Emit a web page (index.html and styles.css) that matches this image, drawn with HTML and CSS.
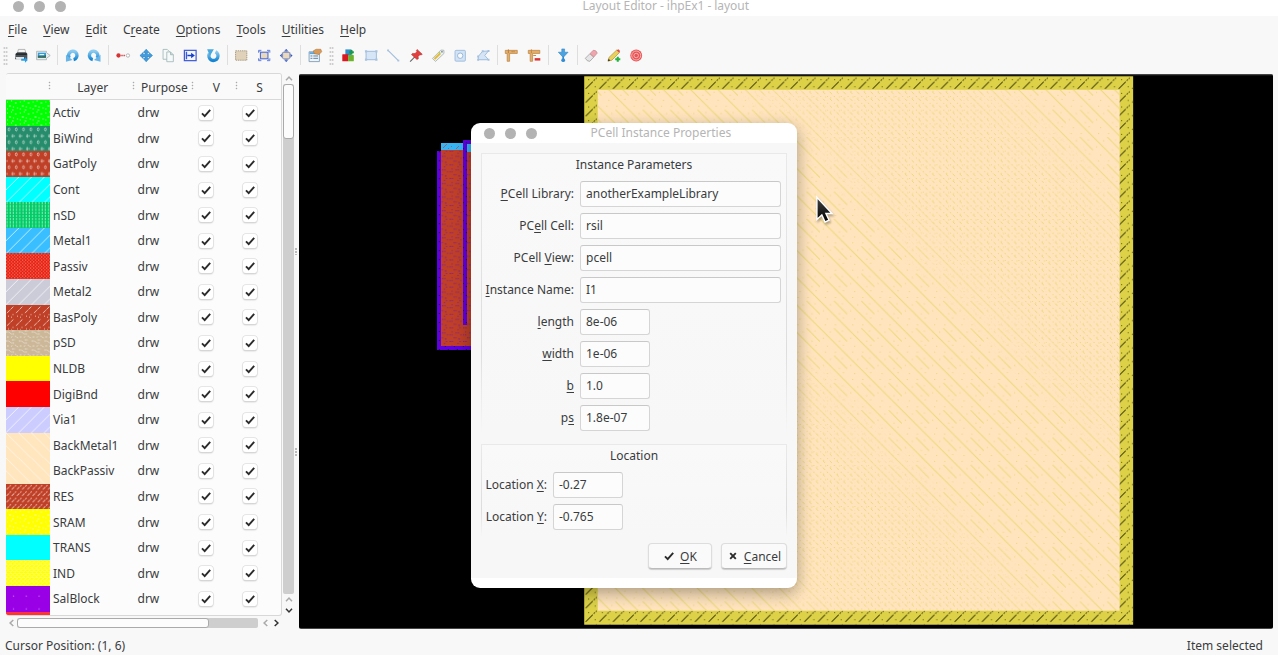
FILE: index.html
```html
<!DOCTYPE html>
<html lang="en">
<head>
<meta charset="utf-8">
<title>Layout Editor - ihpEx1 - layout</title>
<link rel="stylesheet" href="styles.css">
</head>
<body>
<svg class="defs" width="0" height="0">
<defs>
<linearGradient id="gBlue" x1="0" y1="0" x2="0" y2="1"><stop offset="0" stop-color="#8ccbf0"/><stop offset="1" stop-color="#1686d2"/></linearGradient>
<linearGradient id="gCur" x1="0" y1="0" x2="0" y2="1"><stop offset="0" stop-color="#444"/><stop offset="1" stop-color="#000"/></linearGradient>
<symbol id="tick" viewBox="0 0 12 12"><path d="M2 6.4 4.7 9.2 10.2 2.9" fill="none" stroke="#2b2b2b" stroke-width="1.9"/></symbol>
<symbol id="chev" viewBox="0 0 8 8"><path d="M1 5.8 4 2.6 7 5.8" fill="none" stroke="currentColor" stroke-width="1.5"/></symbol>
<pattern id="pSpeck" width="12.8" height="11" patternUnits="userSpaceOnUse"><path d="M1 2h1M5 1h1M9 3h1.5M3 6h2M7 7h1M11 8h1M1 9h1M6 10h1.5" stroke="#fff" stroke-opacity=".75"/></pattern>
<pattern id="pBeads" width="7.3" height="12.8" patternUnits="userSpaceOnUse"><ellipse cx="3" cy="3.4" rx=".9" ry="1.5" fill="none" stroke="#fff" stroke-width=".7" stroke-opacity=".75"/><path d="M6.6 8v4M5.4 10h2.4M1 9v2" stroke="#fff" stroke-width=".7" stroke-opacity=".7"/></pattern>
<pattern id="pDiag" width="12.8" height="12.8" patternUnits="userSpaceOnUse"><path d="M-1 13.8 13.8-1M-1 1 1-1M11.8 13.8 13.8 11.8" stroke="#fff" stroke-width=".9" stroke-opacity=".75"/></pattern>
<pattern id="pBack" width="12.8" height="12.8" patternUnits="userSpaceOnUse"><path d="M-1-1 13.8 13.8M11.8-1l2 2M-1 11.8l2 2" stroke="#fff" stroke-width=".8" stroke-opacity=".6"/></pattern>
<pattern id="pVert" width="3.2" height="3.2" patternUnits="userSpaceOnUse"><path d="M1 0v2.4" stroke="#fff" stroke-width=".8" stroke-opacity=".65"/></pattern>
<pattern id="pDots" width="3.2" height="3.2" patternUnits="userSpaceOnUse"><path d="M0 .8h1.1M1.6 2.4h1.1" stroke="#fff" stroke-width=".9" stroke-opacity=".6"/></pattern>
<pattern id="pDash" width="9" height="12.8" patternUnits="userSpaceOnUse"><path d="M1 8 7.5 1.5" stroke="#fff" stroke-width=".9" stroke-opacity=".75" stroke-dasharray="4 1"/><path d="M2 11h1M6.5 9.5h1M5 12h1" stroke="#fff" stroke-opacity=".7"/></pattern>
<pattern id="pZig" width="12.8" height="9" patternUnits="userSpaceOnUse"><path d="M0 2h3l2 2h3M6 1h3M9 6l3 2M1 7h2M5 7.5l2-1.5" stroke="#fff" stroke-width=".8" fill="none" stroke-opacity=".65" stroke-dasharray="1.6 .8"/></pattern>
<pattern id="pTight" width="5.2" height="6.4" patternUnits="userSpaceOnUse"><path d="M.5 5.5 5 1" stroke="#fff" stroke-width=".9" stroke-opacity=".65" stroke-dasharray="3.5 1"/></pattern>
<pattern id="pWeave" width="4.3" height="4.3" patternUnits="userSpaceOnUse"><path d="M0 4 4 0M.3.5h1.6M3 3h1" stroke="#fff" stroke-width=".8" stroke-opacity=".65"/></pattern>
<pattern id="pFew" width="12.8" height="12.8" patternUnits="userSpaceOnUse"><path d="M7 10h1" stroke="#fff" stroke-opacity=".6"/></pattern>
<pattern id="cFill" width="27.35" height="27.35" patternUnits="userSpaceOnUse"><path d="M-1-1 28.35 28.35M26.35-1l2 2M-1 26.35l2 2" stroke="#ebd976"/><path d="M14 0 27.3 13.3" stroke="#ebd976"/><path d="M3 10h1M7 18h1M19 13h1M10 4h1M23 17h1M15 24h1M5 24h1M22 3h1" stroke="#e8d86b"/></pattern>
<pattern id="cFill2" width="13.68" height="13.68" patternUnits="userSpaceOnUse"><path d="M0 0 13.68 13.68M6.84 0l6.84 6.84M0 6.84l6.84 6.84" stroke="#e9d770" stroke-width=".9" stroke-dasharray="1.4 2.4 3 2.87"/><path d="M10 2h1M3 9h1M5 1h1" stroke="#e8d86b"/></pattern>
<linearGradient id="gBand" gradientUnits="userSpaceOnUse" x1="540" y1="0" x2="780" y2="-240" spreadMethod="repeat"><stop offset="0" stop-color="#000"/><stop offset=".2" stop-color="#000"/><stop offset=".4" stop-color="#fff"/><stop offset=".65" stop-color="#fff"/><stop offset=".85" stop-color="#000"/><stop offset="1" stop-color="#000"/></linearGradient>
<linearGradient id="gGap" gradientUnits="userSpaceOnUse" x1="540" y1="0" x2="780" y2="-240" spreadMethod="repeat"><stop offset="0" stop-color="#fff"/><stop offset=".2" stop-color="#fff"/><stop offset=".4" stop-color="#222"/><stop offset=".65" stop-color="#222"/><stop offset=".85" stop-color="#fff"/><stop offset="1" stop-color="#fff"/></linearGradient>
<mask id="band" maskUnits="userSpaceOnUse" x="299" y="74" width="975" height="555"><rect x="299" y="74" width="975" height="555" fill="url(#gBand)"/></mask>
<mask id="gap" maskUnits="userSpaceOnUse" x="299" y="74" width="975" height="555"><rect x="299" y="74" width="975" height="555" fill="url(#gGap)"/></mask>
<pattern id="cEdge" x="584.5" y="76" width="13.68" height="13.68" patternUnits="userSpaceOnUse"><path d="M1.5 12.5 12.5 1.5" stroke="#4b4712" stroke-width="1" stroke-dasharray="10 1.2 2 1"/><path d="M4 3.5h1M10.5 10.5h1" stroke="#5b5619"/></pattern>
<pattern id="cRed" width="13.6" height="13.6" patternUnits="userSpaceOnUse"><path d="M1 1.5h4M9 3.5h1M11 1.5h1M3 5.5h1M7 6.5h4M1 8.5h1M3 8.5h1M12 8.5h1M5 11.5h3M10 12.5h2" stroke="#7a19a0" stroke-dasharray="1.2 1"/></pattern>
<pattern id="cVio" width="9" height="9" patternUnits="userSpaceOnUse"><path d="M1 1l4 4M7 7l1 1" stroke="#1b0052" stroke-width=".9"/></pattern>
</defs>
</svg>
<div class="window">
  <header class="titlebar">
    <div class="dots"><i></i><i></i><i></i></div>
    <span class="title">Layout Editor - ihpEx1 - layout</span>
  </header>
  <nav class="menubar"><span><u>F</u>ile</span><span><u>V</u>iew</span><span><u>E</u>dit</span><span>C<u>r</u>eate</span><span><u>O</u>ptions</span><span><u>T</u>ools</span><span><u>U</u>tilities</span><span><u>H</u>elp</span></nav>
  <div class="toolbar">
    <i class="grip first"></i>
    <svg viewBox="0 0 16 16"><path d="M5 1.5h7l1 4H4z" fill="#f4f4f4" stroke="#888" stroke-width=".6"/><path d="M2 6 4 4.5h9L14.5 6v6h-13z" fill="#4b5358"/><path d="M3 5.5h11v2H2z" fill="#252a2d"/><path d="M2 9.5h9v3H3z" fill="#e1e5e7"/><path d="M8 11.5h4v-1.8l3 3-3 3v-2H8z" fill="#2b9fe6"/></svg>
    <svg viewBox="0 0 16 16"><path d="M1 3.5h10.5V5L15.5 8l-4 3v1.5H1z" fill="#e6eef0" stroke="#9fa9a9" stroke-width=".8"/><path d="M2.3 5H11v5.5H2.3z" fill="#399cd6"/><path d="M2.3 8q4 2 8.7-.5v3H2.3z" fill="#3b6b54"/><path d="M4 7h5" stroke="#fff"/></svg>
    <i class="sep"></i>
    <svg viewBox="0 0 16 16"><path d="M5 10.6A4.5 4.5 0 1 1 9.5 12.3" fill="none" stroke="url(#gBlue)" stroke-width="3.6"/><path d="M1.3 7.3v7.4l7-1.9z" fill="#69b5e7"/></svg>
    <svg viewBox="0 0 16 16"><path d="M11 10.6A4.5 4.5 0 1 0 6.5 12.3" fill="none" stroke="url(#gBlue)" stroke-width="3.6"/><path d="M14.7 7.3v7.4l-7-1.9z" fill="#69b5e7"/></svg>
    <i class="sep"></i>
    <svg viewBox="0 0 16 16"><circle cx="3" cy="8" r="2.3" fill="#d83232"/><path d="M6 8h4" stroke="#c44" stroke-width="1.8" stroke-dasharray="1.5 .8"/><circle cx="13" cy="8" r="1.8" fill="#fff" stroke="#aaa" stroke-width=".9"/></svg>
    <svg viewBox="0 0 16 16"><path d="m8 1.3 3 3.4H9.2v2.1h2.2V5l3.3 3-3.3 3V9.2H9.2v2.1H11l-3 3.4-3-3.4h1.8V9.2H4.6V11L1.3 8l3.3-3v1.8h2.2V4.7H5z" fill="#3f9ee2" stroke="#1f74b7" stroke-width=".6"/></svg>
    <svg viewBox="0 0 16 16" fill="#f5f9f9" stroke="#a3b7b7" stroke-width=".9"><path d="M2.5 1.5H7l3 3V12H2.5z"/><path d="M6.5 4.2h4l3 3v7.4h-7z"/><path d="M10.5 4.2v3h3" fill="#c4d6d6"/></svg>
    <svg viewBox="0 0 16 16"><rect x="1.8" y="2.5" width="12.5" height="11" fill="#f4f7ff" stroke="#3e5bd4" stroke-width="1.3"/><path d="M4 4v8" stroke="#3e5bd4" stroke-width="1.5"/><path d="M5 7.2h4V5l4 3-4 3V8.8H5z" fill="#1740c9"/></svg>
    <svg viewBox="0 0 16 16"><path d="M10.5 4A4.9 4.9 0 1 1 4 6" fill="none" stroke="url(#gBlue)" stroke-width="3.6"/><path d="M1.5 1.2h7.2L4.5 8.4z" fill="#4aa9df"/></svg>
    <i class="sep"></i>
    <svg viewBox="0 0 16 16"><rect x="2" y="3" width="12" height="10" fill="#e0d2ba" stroke="#a5967d" stroke-dasharray="1.5 .8"/></svg>
    <svg viewBox="0 0 16 16"><rect x="4" y="4.5" width="8" height="7" fill="#ead8bd" stroke="#5470d1" stroke-width="1.2"/><path d="M2 5V2.5h3M11 2.5h3V5M14 11v2.5h-3M5 13.5H2V11M3 3.5l2 2M13 3.5l-2 2M13 12.5l-2-2M3 12.5l2-2" fill="none" stroke="#5978d8"/></svg>
    <svg viewBox="0 0 16 16"><path d="m8 1 2 2H6zM8 15l2-2H6zM1.2 8l2.3-2v4zM14.8 8l-2.3-2v4z" fill="#294fc8"/><ellipse cx="8" cy="8" rx="5.2" ry="4.8" fill="#8492bd"/><rect x="4.7" y="5.2" width="6.6" height="5.8" fill="#ead9be"/></svg>
    <i class="sep"></i>
    <svg viewBox="0 0 16 16"><path d="M1.5 4h11v10.5h-11z" fill="#eef4fa" stroke="#7897b1" stroke-width=".9"/><path d="M2 4.5h10v2H2z" fill="#58a5dc"/><path d="M3 8.5h2M6 8.5h5M3 11h2M6 11h5" stroke="#54799a"/><path d="m6 3 3-1.7h5L15 4l-3 3-5-1z" fill="#d69a5a" stroke="#a86931" stroke-width=".5"/></svg>
    <i class="grip"></i>
    <svg viewBox="0 0 16 16"><rect x="5" y="1.5" width="6.5" height="6.5" fill="#318fcb"/><rect x="1.7" y="6.6" width="6.5" height="7.6" rx=".7" fill="#d71920"/><rect x="8" y="7.5" width="6" height="6.7" rx=".7" fill="#6bb32c"/><path d="M11.5 2v5M9 4.5h5" stroke="#16994a" stroke-width="2.1"/></svg>
    <svg viewBox="0 0 16 16"><rect x="2.5" y="3.5" width="11" height="9" fill="#d6e6f7" stroke="#9bb9db"/><path d="M1.3 2.3h2.4v2.4H1.3zM12.3 2.3h2.4v2.4h-2.4zM1.3 11.3h2.4v2.4H1.3zM12.3 11.3h2.4v2.4h-2.4z" fill="#a9c3e0"/></svg>
    <svg viewBox="0 0 16 16"><path d="M2.5 2.5 13.5 13.5" stroke="#9fbddd" stroke-width="1.2"/><path d="M1.5 1.5h2v2h-2zM12.5 12.5h2v2h-2z" fill="#a9c3e0"/></svg>
    <svg viewBox="0 0 16 16"><path d="m1.5 14.5 5-5" stroke="#666" stroke-width="1.2"/><path d="m9 1.5 5.5 5.2-1.4.8-1-.4-2 2 .2 2.4-1.5.8L3 7l1-1.2 2.7.1 2-2-.5-1.3z" fill="#e23e3e" stroke="#ab2020" stroke-width=".5"/></svg>
    <svg viewBox="0 0 16 16"><path d="m1.8 11.2 9-9 3.3.2.1 3.4-9 8.5z" fill="#eef1f1" stroke="#9fa9aa" stroke-width=".8"/><path d="m4 11.8 6-6" stroke="#e5bc34" stroke-width="2.2"/><path d="m9 6 1.2-1.2" stroke="#bc4" stroke-width="2"/><circle cx="12" cy="4" r=".9" fill="#678"/></svg>
    <svg viewBox="0 0 16 16"><rect x="2.5" y="2.5" width="11" height="11.5" rx="1" fill="#d3e3f4" stroke="#9ebcdc"/><circle cx="8" cy="8.2" r="2.9" fill="#f8fbff" stroke="#92b4d8"/></svg>
    <svg viewBox="0 0 16 16"><path d="m2.8 9 4.5-5.5 6.2-.3L9.7 8l4 4.5H2.7z" fill="#d6e5f5" stroke="#9dbbdc"/><path d="M1.6 8h2v2h-2zM6.5 2.5h2v2h-2zM12.7 2.2h2v2h-2zM12.7 11.5h2v2h-2zM1.6 11.5h2v2h-2z" fill="#a6c1df"/></svg>
    <i class="sep"></i>
    <svg viewBox="0 0 16 16"><path d="M1.7 2.5h12.8v3.3H6.3v8.4H3.7V5.8h-2z" fill="#e2ae6c" stroke="#b77d39" stroke-width=".7"/><path d="M5 1.5v4M9 3v1.5M11 3v1.5" stroke="#b77d39"/></svg>
    <svg viewBox="0 0 16 16"><path d="M1.7 2.5h12.3v3.3H6.3v8.4H3.7V5.8h-2z" fill="#e2ae6c" stroke="#b77d39" stroke-width=".7"/><path d="M5 1.5v4M7 8h3" stroke="#c18338"/><rect x="8.5" y="10.8" width="6" height="2.6" fill="#db3133"/></svg>
    <i class="sep"></i>
    <svg viewBox="0 0 16 16"><path d="M6.5 1h3v3.5h3.7L8 10 2.8 4.5h3.7z" fill="#4ba2e1" stroke="#3184c4" stroke-width=".6"/><path d="M8 9v3" stroke="#3184c4" stroke-width="1.6"/><circle cx="8" cy="13" r="2" fill="#318bd5"/></svg>
    <i class="sep"></i>
    <svg viewBox="0 0 16 16"><path d="m1.7 11 5-5 4 3.8-4.2 4.4q-2.7.4-4.8-3.2z" fill="#e5e5e8" stroke="#999" stroke-width=".8"/><path d="m6.7 6 3.5-3.6q3.2-.4 4.3 3L10.8 9.6z" fill="#efa5ad" stroke="#bd8088" stroke-width=".7"/></svg>
    <svg viewBox="0 0 16 16"><path d="m1.3 14 1.2-4L10.8 2l2.8 2.8L5.5 13z" fill="#ead15c" stroke="#a78b2d" stroke-width=".7"/><path d="m10.5 2.3 2-1 1.8 1.8-1 2z" fill="#e14d4d"/><path d="m1.3 14 .8-2.5 1.7 1.8z" fill="#333"/><path d="M11.8 9.3v5.4M9.1 12h5.4" stroke="#27b03d" stroke-width="2.2"/></svg>
    <svg viewBox="0 0 16 16"><circle cx="8" cy="8" r="6.3" fill="#e85555"/><circle cx="8" cy="8" r="4.8" fill="none" stroke="#f7b5b5"/><circle cx="8" cy="8" r="2.4" fill="none" stroke="#f7b5b5"/></svg>
  </div>
  <main class="main">
    <aside class="side">
      <div class="tablewrap">
        <section class="table">
          <div class="thead"><span class="hsw"></span><span class="hn">Layer</span><span class="hp">Purpose</span><span class="hv">V</span><span class="hs">S</span></div>
          <div class="row"><svg class="c-activ"><rect fill="url(#pSpeck)"/></svg><b>Activ</b><em>drw</em><i><svg><use href="#tick"/></svg></i><i><svg><use href="#tick"/></svg></i></div>
          <div class="row"><svg class="c-biwind"><rect fill="url(#pBeads)"/></svg><b>BiWind</b><em>drw</em><i><svg><use href="#tick"/></svg></i><i><svg><use href="#tick"/></svg></i></div>
          <div class="row"><svg class="c-brick"><rect fill="url(#pBeads)"/></svg><b>GatPoly</b><em>drw</em><i><svg><use href="#tick"/></svg></i><i><svg><use href="#tick"/></svg></i></div>
          <div class="row"><svg class="c-cyan"><rect fill="url(#pDiag)"/></svg><b>Cont</b><em>drw</em><i><svg><use href="#tick"/></svg></i><i><svg><use href="#tick"/></svg></i></div>
          <div class="row"><svg class="c-nsd"><rect fill="url(#pVert)"/></svg><b>nSD</b><em>drw</em><i><svg><use href="#tick"/></svg></i><i><svg><use href="#tick"/></svg></i></div>
          <div class="row"><svg class="c-metal1"><rect fill="url(#pDiag)"/></svg><b>Metal1</b><em>drw</em><i><svg><use href="#tick"/></svg></i><i><svg><use href="#tick"/></svg></i></div>
          <div class="row"><svg class="c-passiv"><rect fill="url(#pDots)"/></svg><b>Passiv</b><em>drw</em><i><svg><use href="#tick"/></svg></i><i><svg><use href="#tick"/></svg></i></div>
          <div class="row"><svg class="c-metal2"><rect fill="url(#pDiag)"/></svg><b>Metal2</b><em>drw</em><i><svg><use href="#tick"/></svg></i><i><svg><use href="#tick"/></svg></i></div>
          <div class="row"><svg class="c-brick"><rect fill="url(#pDash)"/></svg><b>BasPoly</b><em>drw</em><i><svg><use href="#tick"/></svg></i><i><svg><use href="#tick"/></svg></i></div>
          <div class="row"><svg class="c-psd"><rect fill="url(#pZig)"/></svg><b>pSD</b><em>drw</em><i><svg><use href="#tick"/></svg></i><i><svg><use href="#tick"/></svg></i></div>
          <div class="row"><svg class="c-yellow"></svg><b>NLDB</b><em>drw</em><i><svg><use href="#tick"/></svg></i><i><svg><use href="#tick"/></svg></i></div>
          <div class="row"><svg class="c-red"></svg><b>DigiBnd</b><em>drw</em><i><svg><use href="#tick"/></svg></i><i><svg><use href="#tick"/></svg></i></div>
          <div class="row"><svg class="c-via"><rect fill="url(#pDiag)"/></svg><b>Via1</b><em>drw</em><i><svg><use href="#tick"/></svg></i><i><svg><use href="#tick"/></svg></i></div>
          <div class="row"><svg class="c-back"><rect fill="url(#pBack)"/></svg><b>BackMetal1</b><em>drw</em><i><svg><use href="#tick"/></svg></i><i><svg><use href="#tick"/></svg></i></div>
          <div class="row"><svg class="c-back"><rect fill="url(#pBack)"/></svg><b>BackPassiv</b><em>drw</em><i><svg><use href="#tick"/></svg></i><i><svg><use href="#tick"/></svg></i></div>
          <div class="row"><svg class="c-brick"><rect fill="url(#pTight)"/></svg><b>RES</b><em>drw</em><i><svg><use href="#tick"/></svg></i><i><svg><use href="#tick"/></svg></i></div>
          <div class="row"><svg class="c-yellow"><rect fill="url(#pSpeck)"/></svg><b>SRAM</b><em>drw</em><i><svg><use href="#tick"/></svg></i><i><svg><use href="#tick"/></svg></i></div>
          <div class="row"><svg class="c-cyan"></svg><b>TRANS</b><em>drw</em><i><svg><use href="#tick"/></svg></i><i><svg><use href="#tick"/></svg></i></div>
          <div class="row"><svg class="c-yellow"><rect fill="url(#pWeave)"/></svg><b>IND</b><em>drw</em><i><svg><use href="#tick"/></svg></i><i><svg><use href="#tick"/></svg></i></div>
          <div class="row"><svg class="c-sal"><rect fill="url(#pFew)"/></svg><b>SalBlock</b><em>drw</em><i><svg><use href="#tick"/></svg></i><i><svg><use href="#tick"/></svg></i></div>
          <div class="row"><svg class="c-last"></svg></div>
        </section>
        <div class="vbar"><svg class="ch off"><use href="#chev"/></svg><div class="vtrack"><div class="vthumb"></div></div><svg class="ch off"><use href="#chev"/></svg><svg class="ch down"><use href="#chev"/></svg></div>
      </div>
      <div class="hbar"><svg class="ch off left"><use href="#chev"/></svg><div class="htrack"><div class="hthumb"></div></div><svg class="ch off left"><use href="#chev"/></svg><svg class="ch right"><use href="#chev"/></svg></div>
    </aside>
    <div class="splitter"><i></i><i></i></div>
    <svg class="canvas" viewBox="299 74 975 555">
      <rect x="299" y="74" width="975" height="555"/>
      <path d="M299 74.5h975" stroke="#444"/>
      <g shape-rendering="crispEdges">
        <path d="M437 151h4v-1h22v-10h8v210h-34z" fill="#5e00e0"/>
        <path d="M437 151h4v-1h22v-10h8v210h-34z" fill="url(#cVio)"/>
        <path d="M441 143h22v7h-22zM467 144h6v8h-6z" fill="#35b5f6"/>
        <path d="M443 148l4-4M451 146h1M456 149l3-3M448 148h1" stroke="#b15b65"/>
        <path d="M441 150h22v175h4V152h6v194h-32z" fill="#bf4026"/>
        <path d="M441 150h22v175h4V152h6v194h-32z" fill="url(#cRed)"/>
      </g>
      <rect x="584.5" y="76" width="549.5" height="549" fill="#dcd147"/>
      <rect x="584.5" y="76" width="549.5" height="549" fill="url(#cEdge)"/>
      <rect x="598" y="89.5" width="522.5" height="521.5" fill="#ffe4be"/>
      <rect x="598" y="89.5" width="522.5" height="521.5" fill="url(#cFill)" mask="url(#gap)"/>
      <rect x="598" y="89.5" width="522.5" height="521.5" fill="url(#cFill2)" mask="url(#band)"/>
    </svg>
  </main>
  <footer class="status"><span>Cursor Position: (1, 6)</span><span>Item selected</span></footer>
</div>
<div class="dialog">
  <header class="dtitle"><div class="dots"><i></i><i></i><i></i></div><span class="title">PCell Instance Properties</span></header>
  <div class="dbody">
    <section class="group params">
      <h2>Instance Parameters</h2>
      <div class="form">
        <label><u>P</u>Cell Library:</label><div class="field">anotherExampleLibrary</div>
        <label>PC<u>e</u>ll Cell:</label><div class="field">rsil</div>
        <label>PCell <u>V</u>iew:</label><div class="field">pcell</div>
        <label><u>I</u>nstance Name:</label><div class="field">I1</div>
        <label><u>l</u>ength</label><div class="field small">8e-06</div>
        <label><u>w</u>idth</label><div class="field small">1e-06</div>
        <label><u>b</u></label><div class="field small">1.0</div>
        <label>p<u>s</u></label><div class="field small">1.8e-07</div>
      </div>
    </section>
    <section class="group location">
      <h2>Location</h2>
      <div class="form">
        <label>Location <u>X</u>:</label><div class="field small">-0.27</div>
        <label>Location <u>Y</u>:</label><div class="field small">-0.765</div>
      </div>
    </section>
    <div class="buttons">
      <div class="btn ok"><svg viewBox="0 0 12 12"><use href="#tick"/></svg><span><u>O</u>K</span></div>
      <div class="btn cancel"><svg viewBox="0 0 12 12"><path d="m3.2 3.2 5.6 5.6M8.8 3.2 3.2 8.8" stroke="#2b2b2b" stroke-width="1.9"/></svg><span><u>C</u>ancel</span></div>
    </div>
  </div>
</div>
<svg class="cursor" viewBox="0 0 20 32"><path d="M2 2v23.4l5.2-4.7 3.4 7.4 4.2-1.9-3.3-7.1h6.4z" fill="url(#gCur)" stroke="#fff" stroke-width="1.5"/></svg>
</body>
</html>
```

FILE: styles.css
```css
* { box-sizing: border-box; }
body { margin: 0; width: 1278px; height: 660px; overflow: hidden; background: #fff; color: #3a3c3e; font: 12px/17px "Noto Sans", sans-serif; }
i, em { font-style: normal; }
b { font-weight: 400; }
u { text-decoration-thickness: 1px; text-underline-offset: 2px; text-decoration-skip-ink: none; }
.defs { position: absolute; }
.window { display: flex; flex-direction: column; height: 655px; background: #f8f8f8; }
.titlebar { flex: none; height: 16px; display: flex; background: #fff; }
.dots { display: flex; gap: 9.8px; }
.dots i { width: 11px; height: 11px; border-radius: 50%; background: #b3b3b3; }
.titlebar .dots { padding: 1px 0 0 13px; }
.title { color: #b5b5b5; }
.titlebar .title { margin: 0 0 0 517px; line-height: 12px; letter-spacing: -.05px; }
.menubar { flex: none; height: 26px; display: flex; gap: 16px; padding: 5px 0 0 8px; }
.toolbar { flex: none; height: 31px; display: flex; align-items: center; padding-bottom: 5px; }
.toolbar svg { flex: none; width: 22.4px; height: 15px; }
.sep { width: 1px; height: 20px; margin: 0 2.7px; background: #dedede; }
.grip { width: 5px; height: 19px; margin: 0 3px; background: radial-gradient(circle, #bbb 30%, transparent 45%) 0 0 / 2.5px 4px; opacity: .9; }
.grip.first { margin: 0 1.8px 0 3px; }
.main { flex: none; height: 557px; display: flex; }
.side { width: 294px; padding-left: 6px; }
.tablewrap { display: flex; height: 543px; }
.table { width: 276px; overflow: hidden; background: #fcfcfc; border: 1px solid #d8d8d8; border-left: 0; border-radius: 3px; }
.thead { display: flex; height: 26px; padding-top: 5px; border-bottom: 1px solid #d8d8d8; background: #fafafa; text-align: center; }
.thead span { background: radial-gradient(circle, #aaa 35%, transparent 50%) right 5px / 3px 3px no-repeat, radial-gradient(circle, #aaa 35%, transparent 50%) right 2px / 3px 3px no-repeat, radial-gradient(circle, #aaa 35%, transparent 50%) right 8px / 3px 3px no-repeat; }
.hsw { width: 45px; }
.hn { width: 84px; }
.hp { width: 60px; white-space: nowrap; }
.hv { width: 44px; }
.hs { width: 43px; background: none !important; }
.row { display: flex; align-items: center; height: 25.58px; }
.row > svg { flex: none; align-self: stretch; width: 44px; height: auto; margin-right: 3px; }
.row rect { width: 44px; height: 26px; }
.row b { flex: none; width: 84.5px; }
.row em { flex: none; width: 61.5px; }
.row i { flex: none; width: 14px; height: 14px; margin-right: 30px; border-radius: 3px; background: #fff; box-shadow: 0 0 0 .8px #e0e0e0, 0 1px 1.5px #aaa; display: grid; place-items: center; }
.row i:last-child { margin-right: 0; }
.row i svg { width: 12px; height: 12px; }
.c-activ { background: #00ff00; } .c-biwind { background: #268c6b; } .c-brick { background: #bf4026; }
.c-cyan { background: #00ffff; } .c-nsd { background: #00cc66; } .c-metal1 { background: #39bfff; }
.c-passiv { background: #e8200f; } .c-metal2 { background: #ccccd9; } .c-psd { background: #ccb899; }
.c-yellow { background: #ffff00; } .c-red { background: #ff0000; } .c-via { background: #ccccff; }
.c-back { background: #ffe6bf; } .c-sal { background: #9900e6; } .c-last { background: #ff3333; }
.vbar { width: 12px; padding-left: 1px; display: flex; flex-direction: column; align-items: center; }
.ch { flex: none; width: 8px; height: 11px; color: #333; }
.ch.off { color: #aaa; }
.ch.down { transform: rotate(180deg); }
.ch.left { transform: rotate(-90deg); }
.ch.right { transform: rotate(90deg); }
.vtrack { width: 11px; height: 510px; border-radius: 2px; background: #cecece; }
.vthumb { height: 55px; border: 1px solid #aaa; border-radius: 3px; background: #fcfcfc; }
.hbar { height: 14px; display: flex; align-items: center; }
.hbar .ch { width: 11px; height: 8px; }
.htrack { width: 241px; height: 10px; margin-right: 2px; border-radius: 2px; background: #cecece; }
.hthumb { width: 192px; height: 10px; border: 1px solid #aaa; border-radius: 3px; background: #fcfcfc; }
.splitter { width: 5px; display: flex; flex-direction: column; align-items: center; padding-top: 175px; gap: 192px; }
.splitter i { width: 2px; height: 8px; margin-right: 2px; background: repeating-linear-gradient(#bbb 0 1.5px, transparent 1.5px 3px); }
.canvas { flex: none; width: 974px; height: 555px; margin-top: 1px; border-radius: 2px; }
.status { display: flex; justify-content: space-between; padding: 7px 15px 0 5px; }
.dialog { position: absolute; left: 471px; top: 123px; width: 325.5px; height: 465px; border-radius: 9px; background: #fff; box-shadow: 0 5px 16px rgba(0,0,0,.33); overflow: hidden; }
.dtitle { display: flex; height: 20px; }
.dtitle .dots { padding: 5px 0 0 13px; }
.dtitle .title { margin: 1px 0 0 54px; }
.dbody { height: 435px; padding: 10px 9.5px 0 10px; background: #f7f7f7; }
.group { border: 1px solid; border-image: linear-gradient(#e9e9e9 0%, #ddd 70%, transparent) 1; border-bottom: 0; background: linear-gradient(#f9f9f9, #f7f7f7); }
.group h2 { margin: 0; padding-top: 2px; text-align: center; font: inherit; }
.params { height: 280px; }
.location { height: 92px; margin-top: 11px; }
.form { display: grid; grid-template-columns: 92px 1fr; column-gap: 6px; row-gap: 6px; padding: 8px 5px 0 0; }
.form label { height: 26px; padding-top: 4px; text-align: right; white-space: nowrap; }
.field { height: 26px; padding: 3px 0 0 5px; border: 1px solid #d5d5d5; border-top-color: #c8c8c8; border-radius: 3px; background: #fcfcfc; }
.small { width: 70px; }
.location .form { grid-template-columns: 65px 1fr; }
.buttons { display: flex; justify-content: flex-end; gap: 9px; margin-top: 7px; }
.btn { height: 26px; display: flex; align-items: center; justify-content: center; gap: 5px; border: 1px solid #ddd; border-bottom-color: #bbb; border-radius: 4px; background: #fafafa; box-shadow: 0 1px 1px #ccc; }
.btn svg { width: 12px; height: 12px; }
.ok { width: 64px; }
.cancel { width: 66px; }
.cursor { position: absolute; left: 815px; top: 194.5px; width: 19px; height: 31px; filter: drop-shadow(1px 2px 1px rgba(0,0,0,.3)); }
```
